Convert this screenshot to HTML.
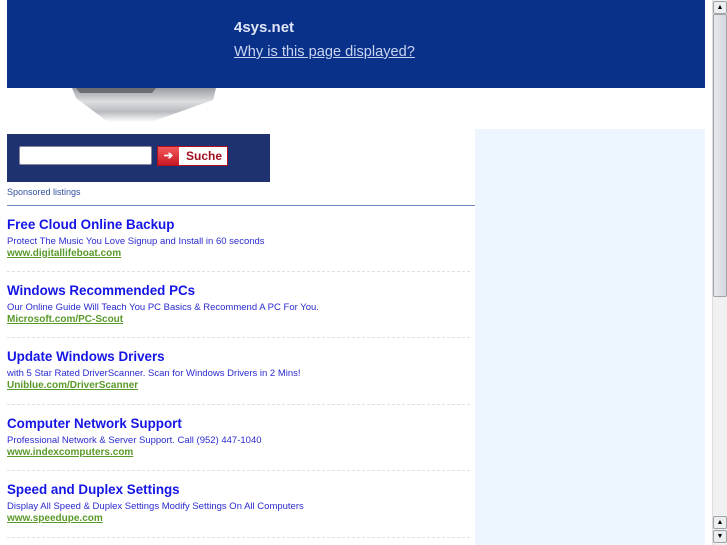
<!DOCTYPE html>
<html><head><meta charset="utf-8"><style>
*{margin:0;padding:0;box-sizing:border-box}
body{width:727px;height:545px;overflow:hidden;background:#fff;font-family:"Liberation Sans",sans-serif;position:relative}
.ban{position:absolute;left:7px;top:0;width:698px;height:88px;background:#0a318a}
.dom{position:absolute;left:234px;top:19px;color:#dfe6f5;font-weight:bold;font-size:15px}
.why{position:absolute;left:234px;top:44px;color:#c8d4f0;font-size:14.6px;text-decoration:underline}
.lap{position:absolute;left:72px;top:88px;width:144px;height:34px;background:linear-gradient(#9a9da2,#dcdee0 40%,#b8bbbf 70%,#fff);clip-path:polygon(0 0,100% 0,98% 35%,55% 100%,25% 100%,3% 30%)}
.lapk{position:absolute;left:76px;top:88px;width:80px;height:5px;background:#6a6d72;clip-path:polygon(0 0,100% 0,95% 100%,5% 100%)}
.sb{position:absolute;left:7px;top:134px;width:263px;height:48px;background:#1e3170}
.inp{position:absolute;left:19px;top:146px;width:133px;height:19px;background:#fff;border:1px solid #889;border-radius:2px}
.btn{position:absolute;left:157px;top:146px;width:71px;height:20px;border:1px solid #b01020;background:#fff}
.btn .ar{position:absolute;left:0;top:0;width:21px;height:18px;background:linear-gradient(#f25a5a,#c81826);color:#fff;font-size:11px;text-align:center;line-height:18px;font-weight:bold}
.btn .t{position:absolute;left:28px;top:2px;color:#a01020;font-weight:bold;font-size:12px}
.sp{position:absolute;left:7px;top:187px;font-size:9px;color:#3050a0}
.hr{position:absolute;left:7px;top:205px;width:468px;height:1px;background:#7088c0}
.rp{position:absolute;left:475px;top:129px;width:230px;height:416px;background:#edf5fe}
.it{position:absolute;left:7px;width:460px}
.it h{display:block;font-size:13.4px;font-weight:bold;color:#1515e6;height:18px}
.it p{font-size:9.5px;color:#2a2ad0;margin-top:1px;height:12px}
.it a{display:block;font-size:10px;font-weight:bold;color:#5a9a2a;text-decoration:underline}
.sep{position:absolute;left:7px;width:463px;border-top:1px dashed #e0e0e0}
.scr{position:absolute;left:712px;top:0;width:15px;height:545px;background:#f0f0f0;border-left:1px solid #ddd}
.thumb{position:absolute;left:713px;top:14px;width:14px;height:283px;background:linear-gradient(90deg,#e6e8ec,#d4d7dc);border:1px solid #a0a4aa;border-radius:2px}
.ab{position:absolute;left:713px;width:14px;height:13px;background:#eceef0;border:1px solid #a0a4aa;border-radius:2px;font-size:7px;text-align:center;line-height:11px}
</style></head><body>
<div class="lap"></div><div class="lapk"></div>
<div class="ban"></div>
<div class="dom">4sys.net</div>
<div class="why">Why is this page displayed?</div>
<div class="rp"></div>
<div class="sb"></div>
<div class="inp"></div>
<div class="btn"><div class="ar">➔</div><div class="t">Suche</div></div>
<div class="sp">Sponsored listings</div>
<div class="hr"></div>

<div class="it" style="top:217px"><h>Free Cloud Online Backup</h><p>Protect The Music You Love Signup and Install in 60 seconds</p><a>www.digitallifeboat.com</a></div>
<div class="sep" style="top:271px"></div>
<div class="it" style="top:283px"><h>Windows Recommended PCs</h><p>Our Online Guide Will Teach You PC Basics &amp; Recommend A PC For You.</p><a>Microsoft.com/PC-Scout</a></div>
<div class="sep" style="top:337px"></div>
<div class="it" style="top:349px"><h>Update Windows Drivers</h><p>with 5 Star Rated DriverScanner. Scan for Windows Drivers in 2 Mins!</p><a>Uniblue.com/DriverScanner</a></div>
<div class="sep" style="top:404px"></div>
<div class="it" style="top:416px"><h>Computer Network Support</h><p>Professional Network &amp; Server Support. Call (952) 447-1040</p><a>www.indexcomputers.com</a></div>
<div class="sep" style="top:470px"></div>
<div class="it" style="top:482px"><h>Speed and Duplex Settings</h><p>Display All Speed &amp; Duplex Settings Modify Settings On All Computers</p><a>www.speedupe.com</a></div>
<div class="sep" style="top:537px"></div>

<div class="scr"></div>
<div class="ab" style="top:1px">▲</div>
<div class="thumb"></div>
<div class="ab" style="top:516px">▲</div>
<div class="ab" style="top:530px">▼</div>
</body></html>
